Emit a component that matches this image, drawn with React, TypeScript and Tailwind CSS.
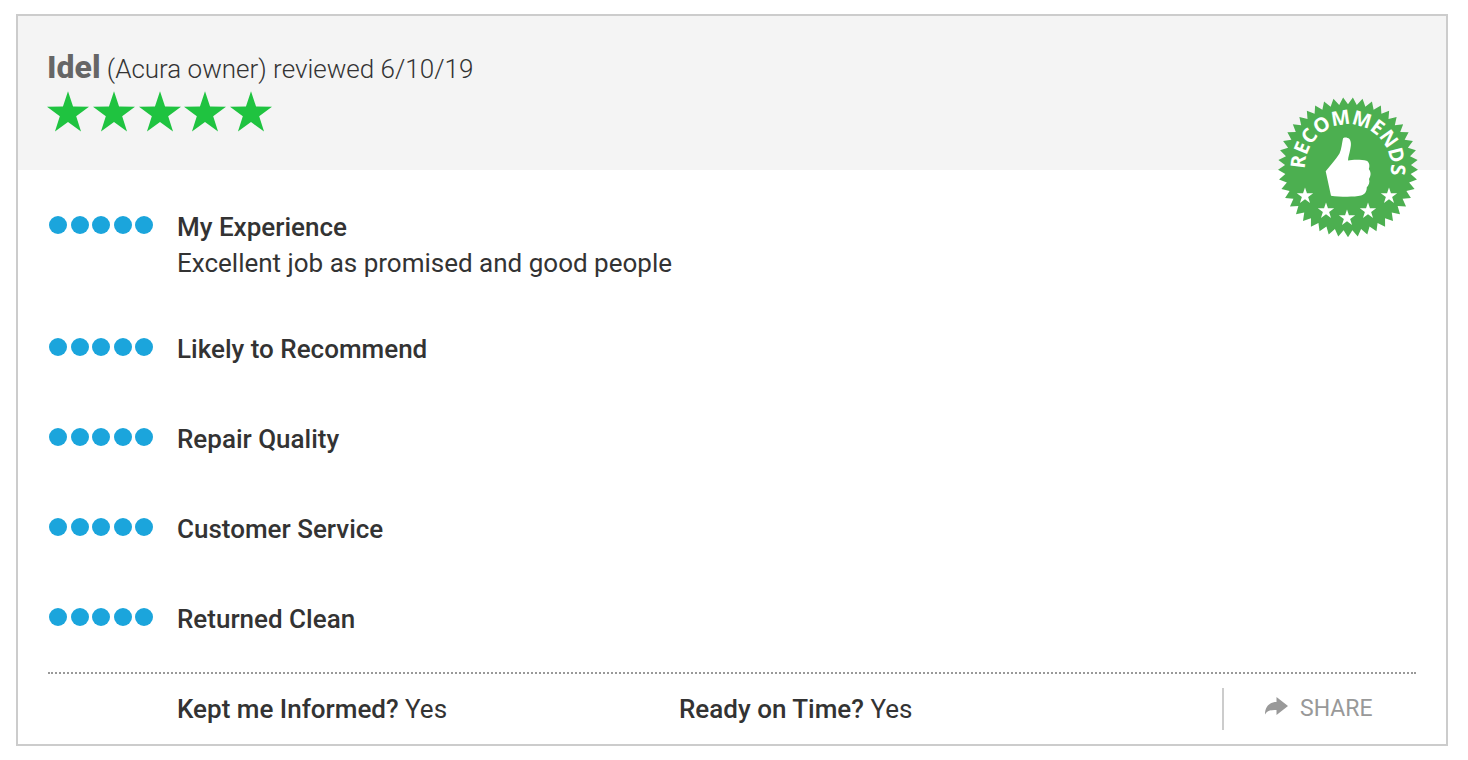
import { useId } from "react"

const ratings = [
  { label: "My Experience", score: 5, comment: "Excellent job as promised and good people" },
  { label: "Likely to Recommend", score: 5 },
  { label: "Repair Quality", score: 5 },
  { label: "Customer Service", score: 5 },
  { label: "Returned Clean", score: 5 },
]

const badgeStars = [
  [37, 108],
  [58, 123],
  [79, 130],
  [100, 123],
  [121, 108],
]

// Alternates outer and inner points around a centre, first point at `start` degrees
function burst(cx: number, cy: number, points: number, outer: number, inner: number, start = -90) {
  return Array.from({ length: points * 2 }, (_, i) => {
    const angle = ((start + (i * 180) / points) * Math.PI) / 180
    const r = i % 2 ? inner : outer
    return `${(cx + r * Math.cos(angle)).toFixed(2)},${(cy + r * Math.sin(angle)).toFixed(2)}`
  }).join(" ")
}

function Stars({ count }: { count: number }) {
  return (
    <div aria-label={`${count} out of 5 stars`} className="flex w-[225px] justify-between" role="img">
      {Array.from({ length: count }, (_, i) => (
        <svg key={i} className="h-[41px] w-[42px] fill-[#1fc340]" viewBox="0 0 42 41">
          <polygon points={burst(21, 22.5, 5, 22.2, 8.6)} />
        </svg>
      ))}
    </div>
  )
}

function Dots({ count }: { count: number }) {
  return (
    <div aria-label={`${count} out of 5`} className="mt-[9px] mr-6 ml-px flex w-[104px] shrink-0 justify-between" role="img">
      {Array.from({ length: count }, (_, i) => (
        <span key={i} className="size-[18px] rounded-full bg-[#1ba5dc]" />
      ))}
    </div>
  )
}

function RecommendsBadge() {
  const arcId = useId()
  return (
    <svg className="absolute top-[72px] right-[18px] size-40" viewBox="0 0 160 160">
      <polygon fill="#4caf50" points={burst(80, 79.3, 45, 70, 63, 90)} />
      <path id={arcId} d="M37.2 83.8A43 43 0 1 1 121.7 89.7" fill="none" />
      <text fill="#fff" fontFamily="'Open Sans', sans-serif" fontSize="20" fontWeight="700" textAnchor="middle">
        <textPath href={`#${arcId}`} startOffset="50%">
          RECOMMENDS
        </textPath>
      </text>
      <path
        d="M75 50.5C76 49 79.5 49.3 81.5 51C83.6 54 83 58 82.2 61.5C81.5 65.5 80.2 69 80 72.5C85 71.3 94 71.5 98.5 72.7C101.5 74 102 78 100.8 81C103.3 84 103 88 101 91C102 94 101 97 98.7 99.5C99 103 97 106.5 93 107.5C86 109.3 71 108.8 63 107.7L57.7 83.3C63 76.5 68 71.5 71.5 65.5C73.5 61 74 55 75 50.5Z"
        fill="#fff"
      />
      {badgeStars.map(([x, y]) => (
        <polygon key={x} fill="#fff" points={burst(x, y, 5, 8.6, 3.3)} />
      ))}
    </svg>
  )
}

function ShareIcon() {
  return (
    <svg aria-hidden="true" className="mb-1 h-5 w-6 fill-current" viewBox="0 0 24 20">
      <path d="M12.5 0L24 9L12.5 18V13C7 12.7 3.5 13.5 1 17.5C1 9.5 5.5 5 12.5 5Z" />
    </svg>
  )
}

export default function App() {
  return (
    <main className="px-4 py-3.5 pr-5 font-['Roboto',sans-serif] text-[26px] text-[#333]">
      <article className="relative border-2 border-[#ccc] bg-white">
        <header className="bg-[#f4f4f4] px-[29px] pt-[31px] pb-[38px]">
          <h2 className="h-11 leading-10 font-light">
            <span className="text-[32px] font-extrabold text-[#666]">Idel</span> (Acura owner) reviewed 6/10/19
          </h2>
          <Stars count={5} />
        </header>
        <RecommendsBadge />

        <div className="px-[30px] pt-[37px]">
          <ul className="space-y-[50px] pb-[33px]">
            {ratings.map((rating) => (
              <li key={rating.label} className="flex items-start">
                <Dots count={rating.score} />
                <div>
                  <h3 className="leading-10 font-medium">{rating.label}</h3>
                  {rating.comment && <p className="leading-8">{rating.comment}</p>}
                </div>
              </li>
            ))}
          </ul>

          <footer className="flex items-center border-t-2 border-dotted border-[#999] py-3.5 pl-[129px]">
            <p className="w-[502px] leading-10">
              <span className="font-medium">Kept me Informed?</span> Yes
            </p>
            <p className="leading-10">
              <span className="font-medium">Ready on Time?</span> Yes
            </p>
            <button
              className="ml-auto flex h-[42px] w-[194px] items-center gap-3 border-l-2 border-[#ccc] pl-10 text-[23px] text-[#999]"
              type="button"
            >
              <ShareIcon />
              SHARE
            </button>
          </footer>
        </div>
      </article>
    </main>
  )
}
